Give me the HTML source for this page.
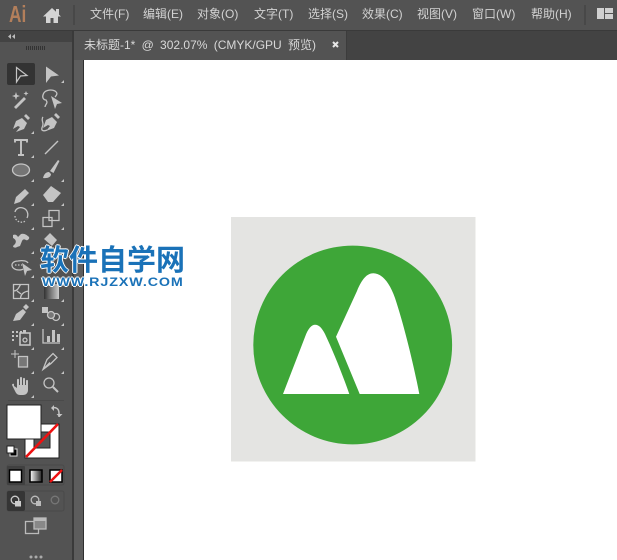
<!DOCTYPE html>
<html><head><meta charset="utf-8">
<style>
html,body{margin:0;padding:0;background:#fff}
#p{position:relative;width:617px;height:560px;overflow:hidden;background:#fff;font-family:"Liberation Sans","Noto Sans CJK SC",sans-serif}
#p svg{position:absolute;left:0;top:0}
.m{position:absolute;top:6px;font-size:12px;line-height:16px;color:#d2d2d2;white-space:nowrap}
.t{position:absolute;left:84px;top:37px;font-size:12px;line-height:16px;color:#d8d8d8;white-space:nowrap;word-spacing:-.2px}
.ai{position:absolute;left:9px;top:1px;font-size:23px;line-height:26px;font-weight:bold;color:#b37f5b;transform:scaleX(.75);transform-origin:0 0}
.w1{position:absolute;left:40px;top:243px;font-size:29px;line-height:36px;font-weight:bold;color:#1a72b8;white-space:nowrap;text-shadow:1px 0 #fff,-1px 0 #fff,0 1px #fff,0 -1px #fff,.4px 0 #1a72b8}
.w2{position:absolute;left:42px;top:275px;font-size:12px;line-height:14px;font-weight:bold;color:#1a72b8;letter-spacing:.75px;white-space:nowrap;transform:scaleX(1.19);transform-origin:0 0;text-shadow:1px 0 #fff,-1px 0 #fff,0 1px #fff,0 -1px #fff}
</style></head><body><div id="p">
<svg width="617" height="560" viewBox="0 0 617 560">
<rect width="617" height="560" fill="#fff"/>
<rect width="617" height="30" fill="#535353"/>
<rect y="30" width="617" height="1" fill="#3a3a3a"/>
<rect x="73" y="31" width="544" height="29" fill="#434343"/>
<rect x="74" y="31" width="272" height="29" fill="#535353"/>
<rect x="346" y="31" width="1" height="29" fill="#3c3c3c"/>
<rect x="0" y="31" width="72" height="529" fill="#535353"/>
<rect x="0" y="31" width="72" height="11" fill="#434343"/>
<rect x="72" y="31" width="2" height="529" fill="#3a3a3a"/>
<rect x="74" y="60" width="9" height="500" fill="#5d5d5d"/>
<rect x="83" y="60" width="1" height="500" fill="#2f2f2f"/>
<!-- top bar -->
<path d="M43 16.500L52 8l4 3.800V9h3v5.600l2 1.900h-3V23h-4.500v-5h-3v5H46v-6.500z" fill="#d4d4d4"/>
<rect x="73" y="5" width="2" height="20" fill="#484848"/>
<rect x="584" y="5" width="2" height="20" fill="#484848"/>
<path d="M597 8h7v11h-7zM605 8h8v5h-8zM605 14h8v5h-8z" fill="#d0d0d0"/>
<path d="M333 42l5 5m0-5l-5 5" stroke="#e6e6e6" stroke-width="2" fill="none"/>
<path d="M11 34l-3 2.500 3 2.500zM15 34l-3 2.500 3 2.500z" fill="#bcbcbc"/>
<path d="M26.500 46v4M28.500 46v4M30.500 46v4M32.500 46v4M34.500 46v4M36.500 46v4M38.500 46v4M40.500 46v4M42.500 46v4M44.500 46v4" stroke="#333" stroke-width="1"/>
<!-- artwork -->
<rect x="231" y="217" width="244.500" height="244.500" fill="#e4e4e2"/>
<circle cx="352.700" cy="345" r="99.400" fill="#3ea638"/>
<path d="M283 394L305 337C308 328 312 324.700 315 324.700C319 324.700 322 328 325 334C333 351 342 373 349.300 394Z" fill="#fff"/>
<path d="M336 336.700L357 291C362 279 367 273.300 373.300 273.300C381 273.300 389 281 395 298C404 325 414 366 419.300 394H359.700Z" fill="#fff"/>
<!-- tool selected -->
<rect x="7" y="63" width="28" height="22" rx="2" fill="#333"/>
<g fill="#c4c4c4">
<path d="M64 80v3h-3zM34 131v3h-3zM34 155v3h-3zM34 179v3h-3zM64 179v3h-3zM34 203v3h-3zM64 203v3h-3zM34 227v3h-3zM64 227v3h-3zM34 251v3h-3zM64 251v3h-3zM34 275v3h-3zM34 299v3h-3zM64 299v3h-3zM34 323v3h-3zM64 323v3h-3zM34 347v3h-3zM64 347v3h-3zM34 371v3h-3zM64 371v3h-3zM34 395v3h-3z"/>
<path d="M46 66.500L59 75.500 51 76.500 46 83z"/>
<path d="M14 107l10-10 2 2-10 10z"/>
<path d="M16 92l1 3 3 1-3 1-1 3-1-3-3-1 3-1zM26 91l.7 1.800 1.800.7-1.800.7-.7 1.800-.7-1.800-1.800-.7 1.800-.7z"/>
<path d="M51 96l11 7-5 1-2 5z"/>
<path d="M13 129l3-8 6-3 5 5-3 6-8 3 4-5-2-1zM24 116l2-2 4 4-2 2z"/>
<path d="M43 128l3-8 6-3 5 5-3 6-8 3 4-5-2-1zM54 115l2-2 4 4-2 2z"/>
<path d="M43 178c1-4 3-6 6-6l2 2c0 3-3 4.500-8 4zM50 171l8-11 1.500 1-6 12z"/>
<path d="M14 204l2-7 9-8 4 4-9 9z"/>
<path d="M43 195l8-9 10 7-8 9-5 0z"/>
<path d="M13 235c2-1 4 0 5 2l3-3c3-1 6 1 8 3 1 2-2 4-3 3-2-1-3-1-4 1l-2 5-3 1c-1 1-4 1-4-1l2-2c2-3 0-5-2-6z"/>
<path d="M44 239l6-6 7 7-5 6zM50 246v6h2v-6z"/>
<path d="M22 263l10 7-5 1-2 5z"/>
<path d="M13 321l3-7 7-5 3 3-6 8zM23 307l3-3 3 3-3 3z"/>
<path d="M42 307h6v6h-6z"/>
<path d="M47 342h3v-6h-3zM52 342h3v-12h-3zM57 342h3v-8h-3z"/>
<path d="M12 331h2v2h-2zM16 331h2v2h-2zM20 331h2v2h-2zM12 335h2v2h-2zM16 335h2v2h-2zM12 339h2v2h-2z"/>
<path d="M23 330h3v3h-3z"/>
<path d="M14 386l3 2v-8c0-1.500 2-1.500 2 0v5h1v-7c0-1.500 2-1.500 2 0v7h1v-6c0-1.500 2-1.500 2 0v6h1v-4c0-1.500 2-1.500 2 0v9c0 3-2 5-5 5h-3c-3 0-4-2-5-4l-3-6c0-1 1-1.500 2-1z"/>
</g>
<g fill="none" stroke="#c4c4c4" stroke-width="1.300">
<path d="M16.500 67.500L27 75.500 20.500 76 16.500 82z" stroke-width="1.200"/>
<path d="M55 97c2-2 3-4 0-6-4-2-11-1-12 4-1 3 1 5 3 5l1 2c0 2-2 3-2 5"/>
<path d="M43 117c-2 2 0 5 0 7 0 3-2 4-1 6 1 1 3 1 5 0"/>
<path d="M15 142.500v-2.500h12v2.500M21 140v15M18 155h6" stroke-width="1.900"/>
<path d="M45 154l13-13" stroke-width="1.400"/>
<ellipse cx="21" cy="170" rx="8.500" ry="6" fill="#757575"/>
<path d="M15 212c1-4 5-5 8-4 4 1 6 6 4 10"/>
<path d="M15 216c0 4 4 7 8 6 1 0 2-1 3-2" stroke-dasharray="1.500 1.500"/>
<path d="M43 217.500h9v9h-9zM49 210.500h10v10h-10z"/>
<path d="M18 261c-4 0-6 2-6 4 0 3 3 5 7 5 2 0 3 0 4-1M28 263c-1-2-5-3-10-2"/>
<path d="M15 265h7" stroke-dasharray="1.500 1.500"/>
<path d="M13.500 284.500h15v14h-15zM13.500 291c4 0 5-3 7-6.500M20.500 299c0-4 2-7 8-8M17 291l4 3"/>
<circle cx="56" cy="317" r="3.500"/><circle cx="51" cy="315" r="3.500" fill="#777"/>
<rect x="20" y="333" width="10" height="12" stroke-width="1.600"/>
<circle cx="25" cy="340" r="2"/>
<path d="M43 329v14h17"/>
<path d="M11 354h8M15 350v8" stroke-width="1"/>
<path d="M18.500 356.500h9v10.500h-9z" fill="#777"/>
<path d="M43 369.500l4-10 6-6 4 4-6 6zM43 369.500l7-7"/>
<circle cx="49" cy="383" r="5"/>
<path d="M53 387l5 5" stroke-width="2"/>
</g>
<defs>
<linearGradient id="g" x1="0" y1="0" x2="1" y2="0"><stop offset="0" stop-color="#333"/><stop offset="1" stop-color="#ccc"/></linearGradient>
<linearGradient id="g2" x1="0" y1="0" x2="1" y2="0"><stop offset="0" stop-color="#fff"/><stop offset="1" stop-color="#222"/></linearGradient>
</defs>
<rect x="44" y="284" width="15" height="15" fill="url(#g)"/>
<!-- fill stroke -->
<rect x="25" y="424" width="34" height="34" fill="#fff" stroke="#222"/>
<rect x="34" y="432" width="16" height="16" fill="#555" stroke="#222"/>
<path d="M26 457L58 424" stroke="#ee1111" stroke-width="2.600"/>
<rect x="7" y="405" width="34" height="34" fill="#fff" stroke="#222"/>
<path d="M52 408c3-1 7 0 7 5v4" fill="none" stroke="#c4c4c4" stroke-width="1.500"/>
<path d="M54 405l-3 3 3 3zM56.500 414l3 3 3-3z" fill="#c4c4c4"/>
<rect x="10" y="449" width="7" height="7" fill="#000" stroke="#ddd"/>
<rect x="7" y="446" width="7" height="7" fill="#fff" stroke="#222"/>
<!-- color mode -->
<rect x="7" y="465" width="57" height="20" rx="2" fill="none" stroke="#4a4a4a"/>
<rect x="7" y="466" width="18" height="19" rx="1" fill="#404040"/>
<rect x="9.500" y="470" width="12" height="12" fill="#fff" stroke="#000" stroke-width="1.500"/>
<rect x="30" y="470" width="12" height="12" fill="url(#g2)" stroke="#000" stroke-width="1.500"/>
<rect x="50" y="470" width="12" height="12" fill="#fff" stroke="#000" stroke-width="1.500"/>
<path d="M50 482l12-12" stroke="#e11" stroke-width="2.500"/>
<!-- draw mode -->
<rect x="7" y="491" width="57" height="20" rx="2" fill="none" stroke="#4a4a4a"/>
<rect x="7" y="491" width="18" height="20" rx="2" fill="#353535"/>
<circle cx="15" cy="500" r="3.800" fill="none" stroke="#ccc" stroke-width="1.300"/>
<rect x="15" y="501" width="6" height="5.500" fill="#ccc"/>
<circle cx="35" cy="500" r="3.800" fill="none" stroke="#bbb" stroke-width="1.300"/>
<rect x="36" y="501" width="5" height="5" fill="#bbb"/>
<circle cx="55" cy="500" r="3.800" fill="none" stroke="#777" stroke-width="1.300"/>
<!-- screen mode -->
<rect x="25.500" y="521.500" width="13" height="12" fill="#535353" stroke="#bbb" stroke-width="1.300"/>
<rect x="34" y="518" width="12" height="11" fill="#888" stroke="#bbb" stroke-width="1.300"/>
<rect x="34" y="518" width="12.500" height="3" fill="#bbb"/>
<circle cx="31" cy="557" r="1.500" fill="#aaa"/><circle cx="36" cy="557" r="1.500" fill="#aaa"/><circle cx="41" cy="557" r="1.500" fill="#aaa"/>
<path d="M8 400.500h56" stroke="#4a4a4a"/>
</svg>
<div class="ai">Ai</div>
<div class="m" style="left:90px">文件(F)</div>
<div class="m" style="left:143px">编辑(E)</div>
<div class="m" style="left:197px">对象(O)</div>
<div class="m" style="left:254px">文字(T)</div>
<div class="m" style="left:308px">选择(S)</div>
<div class="m" style="left:362px">效果(C)</div>
<div class="m" style="left:417px">视图(V)</div>
<div class="m" style="left:472px">窗口(W)</div>
<div class="m" style="left:531px">帮助(H)</div>
<div class="t">未标题-1* &nbsp;@ &nbsp;302.07% &nbsp;(CMYK/GPU &nbsp;预览)</div>
<div class="w1">软件自学网</div>
<div class="w2">WWW.RJZXW.COM</div>
</div></body></html>
